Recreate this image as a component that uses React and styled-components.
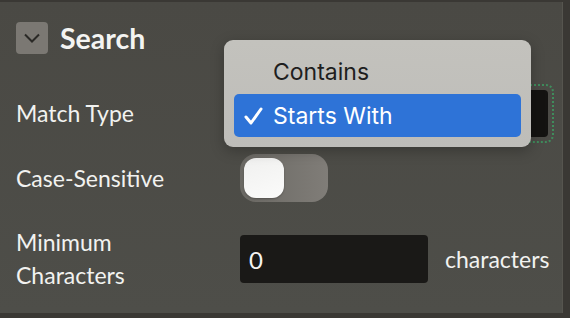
import React, { useState } from 'react';
import styled, { createGlobalStyle } from 'styled-components';

const GlobalStyle = createGlobalStyle`
  html, body {
    margin: 0;
    padding: 0;
    background: #3a3834;
  }
  body {
    font-family: Lato, "Noto Sans", sans-serif;
    color: #f2f2f0;
  }
`;

const Frame = styled.div`
  width: 570px;
  height: 318px;
  padding: 2px 7px 5px 0;
  box-sizing: border-box;
`;

const Panel = styled.section`
  position: relative;
  height: 100%;
  background: linear-gradient(180deg, #4a4944 0%, #4e4e49 100%);
  border-right: 1px solid #56554f;
  padding: 20px 0 0 16px;
  box-sizing: border-box;
`;

const Header = styled.div`
  display: flex;
  align-items: center;
  gap: 12px;
  height: 32px;
`;

const Chevron = styled.button`
  width: 32px;
  height: 32px;
  border: none;
  border-radius: 4px;
  background: #7b7873;
  display: flex;
  align-items: center;
  justify-content: center;
  padding: 0;
`;

const Title = styled.h2`
  margin: 0;
  font-size: 28.5px;
  font-weight: 700;
  color: #f4f4f2;
`;

const Form = styled.div`
  display: grid;
  grid-template-columns: 224px auto;
  align-items: center;
  margin-top: 36px;
`;

const Label = styled.label`
  font-size: 23px;
  line-height: 33px;
  color: #f2f2f0;
  margin-top: ${(p) => p.$mt || 0}px;
`;

const Cell = styled.div`
  display: flex;
  align-items: center;
  gap: 17px;
  margin-top: ${(p) => p.$mt || 0}px;
`;

const SelectWrap = styled.div`
  position: relative;
  width: 308px;
  height: 47px;
  &::after {
    content: '';
    position: absolute;
    inset: -6px;
    border: 2px dotted #3f8c5c;
    border-radius: 8px;
    pointer-events: none;
  }
`;

const SelectBox = styled.div`
  width: 100%;
  height: 100%;
  background: #141311;
  border-radius: 4px;
`;

const Toggle = styled.button`
  width: 88px;
  height: 48px;
  border: none;
  border-radius: 16px;
  padding: 4px;
  background: linear-gradient(90deg, #6a6863 0%, #807d78 100%);
  display: flex;
  align-items: center;
  justify-content: ${(p) => (p.$on ? 'flex-end' : 'flex-start')};
`;

const Knob = styled.span`
  width: 40px;
  height: 40px;
  border-radius: 12px;
  background: linear-gradient(160deg, #f0f0ef 0%, #fbfbfa 100%);
  box-shadow: 0 1px 2px rgba(0, 0, 0, 0.25);
`;

const NumberInput = styled.input`
  width: 188px;
  height: 48px;
  box-sizing: border-box;
  background: #1a1917;
  border: none;
  border-radius: 4px;
  padding: 0 9px;
  font-family: Lato, "Noto Sans", sans-serif;
  font-size: 24px;
  color: #f4f4f2;
  outline: none;
`;

const Suffix = styled.span`
  font-size: 23px;
  color: #f2f2f0;
`;

const Menu = styled.ul`
  position: absolute;
  left: 224px;
  top: 38px;
  width: 307px;
  height: 107px;
  margin: 0;
  padding: 10px 10px;
  box-sizing: border-box;
  list-style: none;
  display: flex;
  flex-direction: column;
  gap: 1px;
  background: linear-gradient(180deg, #c3c2bd 0%, #bebdb9 100%);
  border-radius: 9px;
  box-shadow: 0 4px 14px rgba(0, 0, 0, 0.25);
  font-family: Inter, "Noto Sans", sans-serif;
`;

const MenuItem = styled.li`
  height: 43px;
  display: flex;
  align-items: center;
  padding-left: 10px;
  border-radius: 5px;
  font-size: 23px;
  color: ${(p) => (p.$active ? '#ffffff' : '#1e1e1e')};
  background: ${(p) => (p.$active ? '#2e73d7' : 'transparent')};
`;

const Check = styled.span`
  width: 29px;
  display: inline-flex;
  align-items: center;
`;

const options = ['Contains', 'Starts With'];

export default function App() {
  const [match] = useState('Starts With');
  const [caseSensitive, setCaseSensitive] = useState(false);
  const [min, setMin] = useState('0');

  return (
    <>
      <GlobalStyle />
      <Frame>
        <Panel>
          <Header>
            <Chevron>
              <svg width="18" height="12" viewBox="0 0 18 12">
                <path d="M2 2.5 L9 9.5 L16 2.5" fill="none" stroke="#2a2926" strokeWidth="2" />
              </svg>
            </Chevron>
            <Title>Search</Title>
          </Header>
          <Form>
            <Label>Match Type</Label>
            <Cell>
              <SelectWrap>
                <SelectBox />
              </SelectWrap>
            </Cell>
            <Label $mt={17}>Case-Sensitive</Label>
            <Cell $mt={17}>
              <Toggle $on={caseSensitive} onClick={() => setCaseSensitive(!caseSensitive)}>
                <Knob />
              </Toggle>
            </Cell>
            <Label $mt={24}>
              Minimum
              <br />
              Characters
            </Label>
            <Cell $mt={24}>
              <NumberInput value={min} onChange={(e) => setMin(e.target.value)} />
              <Suffix>characters</Suffix>
            </Cell>
          </Form>
          <Menu>
            {options.map((o) => (
              <MenuItem key={o} $active={o === match}>
                <Check>
                  {o === match && (
                    <svg width="19" height="18" viewBox="0 0 19 18">
                      <path d="M2 10 L7 16 L17 2" fill="none" stroke="#fff" strokeWidth="3" strokeLinecap="round" strokeLinejoin="round" />
                    </svg>
                  )}
                </Check>
                {o}
              </MenuItem>
            ))}
          </Menu>
        </Panel>
      </Frame>
    </>
  );
}
